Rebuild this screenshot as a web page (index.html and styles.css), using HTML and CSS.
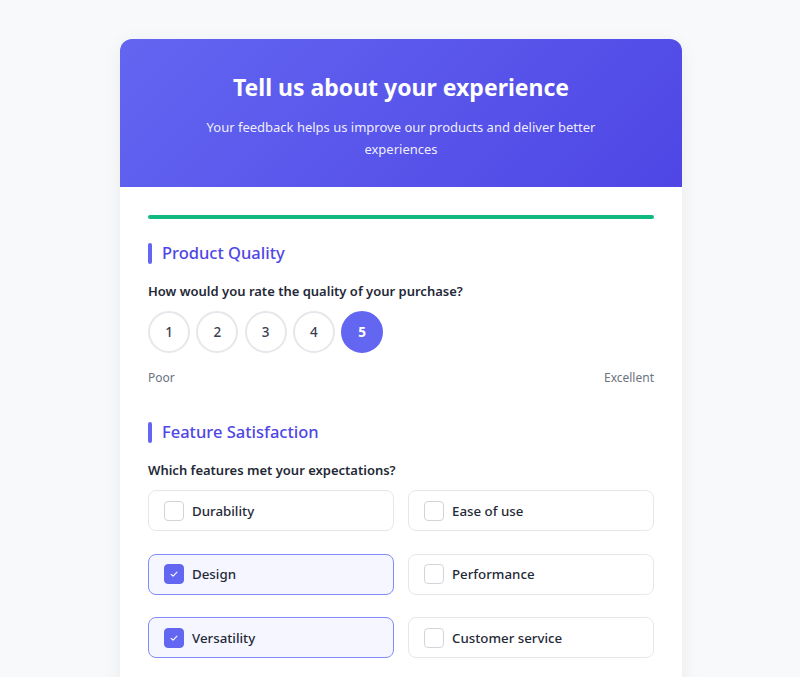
FILE: index.html
```html
<!DOCTYPE html>
<html lang="en">
<head>
<meta charset="utf-8">
<title>Feedback</title>
<link rel="stylesheet" href="styles.css">
</head>
<body>
<div class="page">
  <div class="card">
    <div class="header">
      <h1 class="title">Tell us about your experience</h1>
      <p class="subtitle">Your feedback helps us improve our products and deliver better experiences</p>
    </div>
    <div class="body">
      <div class="progress"><div class="progress-fill"></div></div>

      <section class="section">
        <h2 class="section-title">Product Quality</h2>
        <p class="question">How would you rate the quality of your purchase?</p>
        <div class="rating">
          <span class="rate">1</span>
          <span class="rate">2</span>
          <span class="rate">3</span>
          <span class="rate">4</span>
          <span class="rate active">5</span>
        </div>
        <div class="scale"><span>Poor</span><span>Excellent</span></div>
      </section>

      <section class="section">
        <h2 class="section-title">Feature Satisfaction</h2>
        <p class="question">Which features met your expectations?</p>
        <div class="options">
          <label class="option"><span class="box"></span>Durability</label>
          <label class="option"><span class="box"></span>Ease of use</label>
          <label class="option checked"><span class="box"><svg viewBox="0 0 20 20" width="20" height="20"><path d="M6.8 10.3l2.2 2.1 4.3-4.5" fill="none" stroke="#fff" stroke-width="1.2" stroke-linecap="round" stroke-linejoin="round"/></svg></span>Design</label>
          <label class="option"><span class="box"></span>Performance</label>
          <label class="option checked"><span class="box"><svg viewBox="0 0 20 20" width="20" height="20"><path d="M6.8 10.3l2.2 2.1 4.3-4.5" fill="none" stroke="#fff" stroke-width="1.2" stroke-linecap="round" stroke-linejoin="round"/></svg></span>Versatility</label>
          <label class="option"><span class="box"></span>Customer service</label>
        </div>
      </section>
    </div>
  </div>
</div>
</body>
</html>
```

FILE: styles.css
```css
* { box-sizing: border-box; }
html, body { margin: 0; padding: 0; }
body {
  background: #f8f9fb;
  font-family: "Noto Sans", "Open Sans", sans-serif;
  color: #1f2937;
}
.page {
  padding: 39px 0 0 2px;
  display: flex;
  justify-content: center;
}
.card {
  width: 562px;
  background: #ffffff;
  border-radius: 12px;
  overflow: hidden;
  box-shadow: 0 4px 20px rgba(17, 24, 39, 0.06);
}
.header {
  background: linear-gradient(135deg, #6366f1 0%, #4f46e5 100%);
  color: #ffffff;
  text-align: center;
  padding: 32px 40px 26px;
  height: 148px;
}
.title {
  margin: 0;
  font-size: 23px;
  font-weight: 700;
  line-height: 32px;
}
.subtitle {
  margin: 13px auto 0;
  max-width: 400px;
  font-size: 13px;
  line-height: 22px;
  color: rgba(255, 255, 255, 0.92);
}
.body {
  padding: 28px 28px 40px;
}
.progress {
  height: 4px;
  border-radius: 2px;
  background: #e5e7eb;
  overflow: hidden;
}
.progress-fill {
  width: 100%;
  height: 100%;
  background: #10b981;
}
.section { margin-top: 22px; }
.section + .section { margin-top: 33px; }
.section-title {
  margin: 0;
  display: flex;
  align-items: center;
  gap: 10px;
  font-size: 16.5px;
  font-weight: 500;
  color: #4f46e5;
  line-height: 24px;
}
.section-title::before {
  content: "";
  width: 4px;
  height: 21px;
  border-radius: 2px;
  background: #6366f1;
}
.question {
  margin: 16px 0 0;
  font-size: 13px;
  font-weight: 600;
  color: #1f2937;
  line-height: 20px;
}
.rating {
  margin-top: 10px;
  display: flex;
  gap: 6.3px;
}
.rate {
  width: 42px;
  height: 42px;
  border-radius: 50%;
  border: 2px solid #e5e7eb;
  display: flex;
  align-items: center;
  justify-content: center;
  font-size: 13.5px;
  font-weight: 500;
  color: #374151;
  background: #fff;
}
.rate.active {
  background: #6366f1;
  border-color: #6366f1;
  color: #fff;
  font-weight: 700;
}
.scale {
  margin-top: 16px;
  display: flex;
  justify-content: space-between;
  font-size: 12px;
  color: #6b7280;
  line-height: 18px;
}
.options {
  margin-top: 10px;
  display: grid;
  grid-template-columns: 1fr 1fr;
  column-gap: 14px;
  row-gap: 22.5px;
}
.option {
  height: 41px;
  display: flex;
  align-items: center;
  gap: 8px;
  padding-left: 15px;
  border: 1px solid #e5e7eb;
  border-radius: 8px;
  font-size: 13.3px;
  font-weight: 500;
  color: #1f2937;
  background: #fff;
}
.option.checked {
  border-color: #818cf8;
  background: #f5f6ff;
}
.box {
  width: 20px;
  height: 20px;
  border: 1px solid #d1d5db;
  border-radius: 4px;
  display: flex;
  align-items: center;
  justify-content: center;
  background: #fff;
}
.option.checked .box {
  background: #6366f1;
  border-color: #6366f1;
}
.box svg { display: block; }
```
